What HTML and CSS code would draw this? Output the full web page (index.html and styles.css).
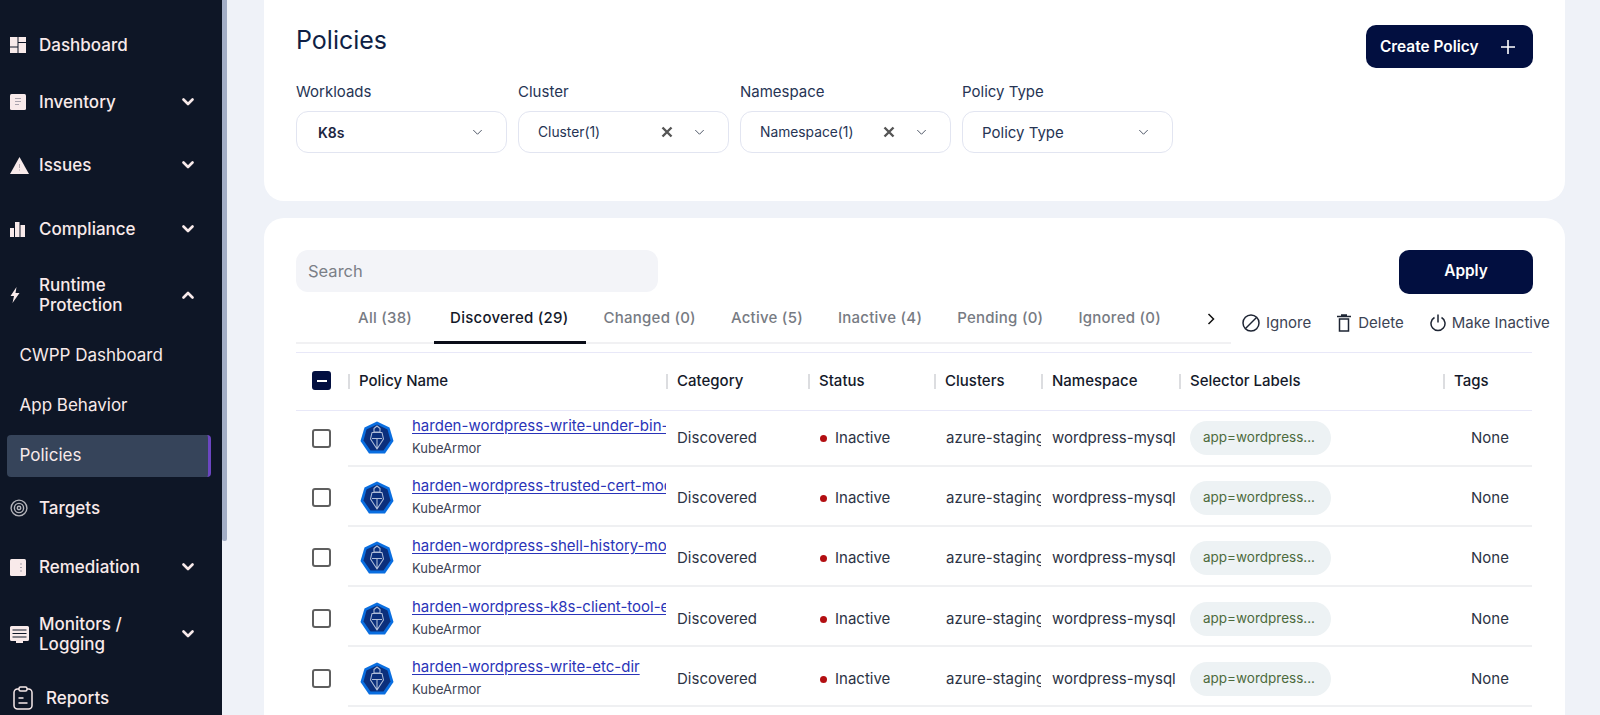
FILE: index.html
```html
<!DOCTYPE html>
<html lang="en">
<head>
    <meta charset="UTF-8">
    <meta name="viewport" content="width=device-width, initial-scale=1.0">
    <title>Policies</title>
    <link rel="stylesheet" href="styles.css">
</head>
<body>
    <svg class="svg-defs" aria-hidden="true">
        <defs>
            <symbol id="chev-down" viewBox="0 0 12 8"><path d="M1.500 1.500 6 6l4.500-4.500" fill="none" stroke="currentColor" stroke-width="2.600" stroke-linecap="round" stroke-linejoin="round"/></symbol>
            <symbol id="chev-up" viewBox="0 0 12 8"><path d="M1.500 6.500 6 2l4.500 4.500" fill="none" stroke="currentColor" stroke-width="2.600" stroke-linecap="round" stroke-linejoin="round"/></symbol>
            <symbol id="caret" viewBox="0 0 12 8"><path d="M1.500 1.500 6 6l4.500-4.500" fill="none" stroke="currentColor" stroke-width="1.100" stroke-linecap="round" stroke-linejoin="round"/></symbol>
            <symbol id="clear" viewBox="0 0 12 12"><path d="M1.500 1.500l9 9M10.500 1.500l-9 9" fill="none" stroke="currentColor" stroke-width="2.400"/></symbol>
            <symbol id="kubearmor" viewBox="0 0 34 34">
                <path d="M17 .5 29.500 6.500 33.500 20 25 32.500H9L.5 20 4.500 6.500Z" fill="#0a6ee0"/>
                <path d="M17 3.500 27.500 8.500 30.500 19.500 23.500 29.500H10.500L3.500 19.500 6.500 8.500Z" fill="#0b2f7c"/>
                <path d="M14 11V7.500L17 5l3 2.500V11ZM12 11.500h10l1.500 6.500L17 28l-6.500-10ZM12 17.500h10M17 17.500V27" fill="none" stroke="#aebcd8" stroke-width="1.100" stroke-linejoin="round"/>
            </symbol>
        </defs>
    </svg>

    <div class="app">
        <aside class="sidebar">
            <nav class="nav">
                <a class="nav-item h54">
                    <span class="nav-icon"><svg width="16" height="16" viewBox="0 0 16 16"><path d="M0 0h7.500v9.500H0ZM8.500 0H16v5H8.500ZM8.500 6H16v10H8.500ZM0 10.500h7.500V16H0Z" fill="#f8eaea"/></svg></span>
                    <span class="nav-label">Dashboard</span>
                </a>
                <a class="nav-item h60">
                    <span class="nav-icon"><svg width="16" height="16" viewBox="0 0 16 16"><rect width="16" height="16" rx="1.500" fill="#f8eaea"/><path d="M5 4.500h6M5 7.500h6M5 10.500h4" stroke="#a9a3ad" stroke-width="1"/></svg></span>
                    <span class="nav-label">Inventory</span>
                    <svg class="nav-chev"><use href="#chev-down"/></svg>
                </a>
                <a class="nav-item h66">
                    <span class="nav-icon"><svg width="19" height="17" viewBox="0 0 19 17"><path d="M9.500 0 19 17H0Z" fill="#f8eaea"/><path d="M9.500 7v4M9.500 12.500v1" stroke="#b5aab0" stroke-width="1"/></svg></span>
                    <span class="nav-label">Issues</span>
                    <svg class="nav-chev"><use href="#chev-down"/></svg>
                </a>
                <a class="nav-item h62">
                    <span class="nav-icon"><svg width="15" height="15" viewBox="0 0 15 15"><path d="M0 6h4v9H0ZM5 0h4.500v15H5ZM10.500 3H15v12h-4.500Z" fill="#f8eaea"/></svg></span>
                    <span class="nav-label">Compliance</span>
                    <svg class="nav-chev"><use href="#chev-down"/></svg>
                </a>
                <a class="nav-item h70">
                    <span class="nav-icon"><svg width="10" height="16" viewBox="0 0 10 16"><path d="M6.500 0 .5 9h3.500L2.500 16 9.500 6H5.500Z" fill="#f8eaea"/></svg></span>
                    <span class="nav-label">Runtime<br>Protection</span>
                    <svg class="nav-chev"><use href="#chev-up"/></svg>
                </a>
                <a class="nav-sub h50">CWPP Dashboard</a>
                <a class="nav-sub h50">App Behavior</a>
                <a class="nav-sub nav-sub-active">Policies</a>
                <a class="nav-item h60 nudge">
                    <span class="nav-icon"><svg width="18" height="18" viewBox="0 0 18 18" fill="none" stroke="#b4b4ba"><circle cx="9" cy="9" r="7.900" stroke-width="1.400"/><circle cx="9" cy="9" r="4.600" stroke-width="1.400"/><circle cx="9" cy="9" r="1.700" stroke-width="1.400"/></svg></span>
                    <span class="nav-label">Targets</span>
                </a>
                <a class="nav-item h60">
                    <span class="nav-icon"><svg width="16" height="17" viewBox="0 0 16 17"><rect width="16" height="17" rx="1.500" fill="#f8eaea"/><path d="M10 5h2M10 8.500h2M10 12h2" stroke="#a9a3ad" stroke-width="1"/></svg></span>
                    <span class="nav-label">Remediation</span>
                    <svg class="nav-chev"><use href="#chev-down"/></svg>
                </a>
                <a class="nav-item h74">
                    <span class="nav-icon"><svg width="19" height="17" viewBox="0 0 19 17"><path d="M1.500 0h16A1.500 1.500 0 0 1 19 1.500v12a1.500 1.500 0 0 1-1.500 1.500H13v2H6v-2H1.500A1.500 1.500 0 0 1 0 13.500v-12A1.500 1.500 0 0 1 1.500 0Z" fill="#f8eaea"/><path d="M2.500 4h14M2.500 7.500h14M2.500 11h14" stroke="#0e1626" stroke-width="1.200"/></svg></span>
                    <span class="nav-label">Monitors /<br>Logging</span>
                    <svg class="nav-chev"><use href="#chev-down"/></svg>
                </a>
                <a class="nav-item h54">
                    <span class="nav-icon nav-icon-wide"><svg width="20" height="24" viewBox="0 0 20 24" fill="none" stroke="#f8eaea" stroke-width="1.500"><rect x="1" y="3" width="18" height="20" rx="3.500"/><rect x="6" y="1" width="8" height="4" rx="1.500" fill="#0e1626"/><path d="M5.500 12h5M5.500 17h9"/></svg></span>
                    <span class="nav-label">Reports</span>
                </a>
            </nav>
        </aside>
        <div class="sidebar-scroll"><div class="sidebar-thumb"></div></div>

        <main class="main">
            <section class="card card-filters">
                <div class="filters-head">
                    <h1 class="page-title">Policies</h1>
                    <button class="btn btn-create">Create Policy
                        <svg width="14" height="14" viewBox="0 0 14 14"><path d="M7 0v14M0 7h14" stroke="#fff" stroke-width="1.600"/></svg>
                    </button>
                </div>
                <div class="filters">
                    <div class="filter">
                        <div class="filter-label">Workloads</div>
                        <div class="select select-k8s">
                            <span class="select-value">K8s</span>
                            <svg class="caret"><use href="#caret"/></svg>
                        </div>
                    </div>
                    <div class="filter">
                        <div class="filter-label">Cluster</div>
                        <div class="select select-multi">
                            <span class="select-value">Cluster(1)</span>
                            <svg class="clear"><use href="#clear"/></svg>
                            <svg class="caret"><use href="#caret"/></svg>
                        </div>
                    </div>
                    <div class="filter">
                        <div class="filter-label">Namespace</div>
                        <div class="select select-multi">
                            <span class="select-value">Namespace(1)</span>
                            <svg class="clear"><use href="#clear"/></svg>
                            <svg class="caret"><use href="#caret"/></svg>
                        </div>
                    </div>
                    <div class="filter">
                        <div class="filter-label">Policy Type</div>
                        <div class="select select-type">
                            <span class="select-value">Policy Type</span>
                            <svg class="caret"><use href="#caret"/></svg>
                        </div>
                    </div>
                </div>
            </section>

            <section class="card card-list">
                <div class="list-top">
                    <div class="search">Search</div>
                    <button class="btn btn-apply">Apply</button>
                </div>

                <div class="toolbar">
                    <div class="tabs">
                        <a class="tab tab-all">All (38)</a>
                        <a class="tab tab-active">Discovered (29)</a>
                        <a class="tab">Changed (0)</a>
                        <a class="tab">Active (5)</a>
                        <a class="tab">Inactive (4)</a>
                        <a class="tab">Pending (0)</a>
                        <a class="tab">Ignored (0)</a>
                        <svg class="tabs-next" width="8" height="12" viewBox="0 0 8 12"><path d="M1.500 1 6.500 6l-5 5" fill="none" stroke="#111" stroke-width="1.500"/></svg>
                    </div>
                    <div class="actions">
                        <a class="action action-ignore"><svg width="18" height="18" viewBox="0 0 18 18" fill="none" stroke="#1d2433" stroke-width="1.500"><circle cx="9" cy="9" r="8"/><path d="M3.500 14.500l11-11"/></svg>Ignore</a>
                        <a class="action action-delete"><svg width="14" height="18" viewBox="0 0 14 18" fill="none" stroke="#1d2433" stroke-width="1.500"><path d="M2.500 5h9v12h-9ZM0 2.500h14M4 1h6" /></svg>Delete</a>
                        <a class="action"><svg width="16" height="18" viewBox="0 0 16 18" fill="none" stroke="#1d2433" stroke-width="1.500"><path d="M8 .5v8M4.500 3.500a7 7 0 1 0 7 0"/></svg>Make Inactive</a>
                    </div>
                </div>

                <table class="policies">
                    <colgroup>
                        <col class="col-check"><col class="col-name"><col class="col-cat"><col class="col-status"><col class="col-cluster"><col class="col-ns"><col class="col-labels"><col class="col-tags">
                    </colgroup>
                    <thead>
                        <tr>
                            <th class="th-check"><span class="checkbox checkbox-on"></span></th>
                            <th>Policy Name</th>
                            <th>Category</th>
                            <th>Status</th>
                            <th>Clusters</th>
                            <th>Namespace</th>
                            <th>Selector Labels</th>
                            <th>Tags</th>
                        </tr>
                    </thead>
                    <tbody>
                        <tr>
                            <td class="td-check"><span class="checkbox"></span></td>
                            <td><div class="policy"><svg class="policy-icon"><use href="#kubearmor"/></svg><div class="policy-text"><a class="policy-link">harden-wordpress-write-under-bin-dir</a><div class="policy-type">KubeArmor</div></div></div></td>
                            <td>Discovered</td>
                            <td><span class="dot"></span>Inactive</td>
                            <td class="td-cluster">azure-staging-cluster</td>
                            <td>wordpress-mysql</td>
                            <td><span class="pill">app=wordpress...</span></td>
                            <td class="td-tags">None</td>
                        </tr>
                        <tr>
                            <td class="td-check"><span class="checkbox"></span></td>
                            <td><div class="policy"><svg class="policy-icon"><use href="#kubearmor"/></svg><div class="policy-text"><a class="policy-link">harden-wordpress-trusted-cert-mod</a><div class="policy-type">KubeArmor</div></div></div></td>
                            <td>Discovered</td>
                            <td><span class="dot"></span>Inactive</td>
                            <td class="td-cluster">azure-staging-cluster</td>
                            <td>wordpress-mysql</td>
                            <td><span class="pill">app=wordpress...</span></td>
                            <td class="td-tags">None</td>
                        </tr>
                        <tr>
                            <td class="td-check"><span class="checkbox"></span></td>
                            <td><div class="policy"><svg class="policy-icon"><use href="#kubearmor"/></svg><div class="policy-text"><a class="policy-link">harden-wordpress-shell-history-mod</a><div class="policy-type">KubeArmor</div></div></div></td>
                            <td>Discovered</td>
                            <td><span class="dot"></span>Inactive</td>
                            <td class="td-cluster">azure-staging-cluster</td>
                            <td>wordpress-mysql</td>
                            <td><span class="pill">app=wordpress...</span></td>
                            <td class="td-tags">None</td>
                        </tr>
                        <tr>
                            <td class="td-check"><span class="checkbox"></span></td>
                            <td><div class="policy"><svg class="policy-icon"><use href="#kubearmor"/></svg><div class="policy-text"><a class="policy-link">harden-wordpress-k8s-client-tool-exec</a><div class="policy-type">KubeArmor</div></div></div></td>
                            <td>Discovered</td>
                            <td><span class="dot"></span>Inactive</td>
                            <td class="td-cluster">azure-staging-cluster</td>
                            <td>wordpress-mysql</td>
                            <td><span class="pill">app=wordpress...</span></td>
                            <td class="td-tags">None</td>
                        </tr>
                        <tr>
                            <td class="td-check"><span class="checkbox"></span></td>
                            <td><div class="policy"><svg class="policy-icon"><use href="#kubearmor"/></svg><div class="policy-text"><a class="policy-link">harden-wordpress-write-etc-dir</a><div class="policy-type">KubeArmor</div></div></div></td>
                            <td>Discovered</td>
                            <td><span class="dot"></span>Inactive</td>
                            <td class="td-cluster">azure-staging-cluster</td>
                            <td>wordpress-mysql</td>
                            <td><span class="pill">app=wordpress...</span></td>
                            <td class="td-tags">None</td>
                        </tr>
                    </tbody>
                </table>
            </section>
        </main>
    </div>
</body>
</html>
```

FILE: styles.css
```css
/* General page styling */
* {
    box-sizing: border-box;
}

html, body {
    height: 100%;
}

body {
    margin: 0;
    overflow: hidden;
    font-family: Inter, "Noto Sans", sans-serif;
    font-size: 15px;
    background-color: #eff2f8;
    color: #1d2433;
}

.svg-defs {
    display: none;
}

.app {
    display: flex;
    height: 715px;
    overflow: hidden;
}

/* Sidebar */
.sidebar {
    width: 222px;
    flex: none;
    background-color: #0e1626;
    color: #f8eaea;
    overflow: hidden;
}

.sidebar-scroll {
    width: 5px;
    flex: none;
}

.sidebar-thumb {
    height: 541px;
    background-color: #a3aec6;
    border-radius: 0 0 2px 2px;
}

.nav {
    padding-top: 18px;
    display: flex;
    flex-direction: column;
}

.nav-item {
    display: flex;
    align-items: center;
    flex: none;
    padding: 0 28px 0 10px;
    font-size: 17px;
    font-weight: 500;
    line-height: 20px;
}

.nav-icon {
    width: 29px;
    flex: none;
    display: flex;
    align-items: center;
}

.nav-icon-wide {
    width: 36px;
    padding-left: 3px;
}

.nav-label {
    flex: 1;
}

.nav-chev {
    width: 12px;
    height: 8px;
    flex: none;
}

/* Item heights in the side menu are not even */
.h50 { height: 50px; }
.h54 { height: 54px; }
.h60 { height: 60px; }
.h62 { height: 62px; }
.h66 { height: 66px; }
.h70 { height: 70px; }
.h74 { height: 74px; }

.nudge {
    padding-top: 2px;
}

.nav-sub {
    display: flex;
    align-items: center;
    flex: none;
    padding-left: 19.500px;
    font-size: 17px;
    font-weight: 400;
}

.nav-sub-active {
    height: 42px;
    margin: 5px 11px 0 7px;
    padding-left: 12.500px;
    padding-bottom: 2px;
    background-color: #36445a;
    border-right: 3px solid #6b46c1;
    border-radius: 4px;
}

/* Main area */
.main {
    flex: 1;
    min-width: 0;
    padding: 0 35px 0 37px;
    display: flex;
    flex-direction: column;
    gap: 17px;
}

.card {
    background-color: #fff;
    padding-left: 32px;
    padding-right: 32px;
}

.card-filters {
    height: 201px;
    flex: none;
    border-radius: 0 0 20px 20px;
}

.card-list {
    flex: 1;
    padding-top: 32px;
    border-radius: 20px 20px 0 0;
}

.filters-head {
    display: flex;
    justify-content: space-between;
    align-items: flex-start;
    padding-top: 25px;
    height: 82px;
}

.page-title {
    margin: 0;
    font-size: 25px;
    font-weight: 400;
    line-height: 30px;
    color: #0f1f45;
}

.btn {
    border: none;
    border-radius: 10px;
    background-color: #020f40;
    color: #fff;
    font-family: inherit;
    font-size: 15.400px;
    font-weight: 600;
}

.btn-create {
    width: 167px;
    height: 43px;
    display: flex;
    align-items: center;
    justify-content: space-between;
    padding: 0 18px 0 14px;
}

.btn-apply {
    width: 134px;
    height: 44px;
    padding-bottom: 4px;
}

.filters {
    display: flex;
    gap: 11px;
}

.filter {
    width: 211px;
}

.filter-label {
    margin-bottom: 9px;
    font-size: 15px;
    line-height: 20px;
    color: #263454;
}

.select {
    height: 42px;
    display: flex;
    align-items: center;
    border: 1px solid #e2e5f1;
    border-radius: 12px;
    color: #263454;
    font-size: 13.800px;
}

.select-value {
    flex: 1;
}

.select-k8s {
    padding: 0 23px 0 21px;
}

.select-k8s .select-value {
    font-size: 14px;
    font-weight: 600;
    color: #1c2540;
}

.select-multi {
    padding: 0 23px 0 19px;
}

.select-type {
    padding: 0 23px 0 19px;
}

.select-type .select-value {
    font-size: 15px;
}

.caret {
    width: 11px;
    height: 7px;
    flex: none;
    color: #4a5263;
}

.clear {
    width: 12px;
    height: 12px;
    flex: none;
    margin-right: 21px;
    color: #555;
}

/* Search and tabs */
.list-top {
    display: flex;
    justify-content: space-between;
    align-items: flex-start;
}

.search {
    width: 362px;
    height: 42px;
    display: flex;
    align-items: center;
    padding: 0 0 1px 12px;
    background-color: #f3f4f8;
    border-radius: 12px;
    font-size: 16.500px;
    color: #7b7f87;
}

.toolbar {
    display: flex;
    height: 50px;
    margin-right: -16px;
}

.tabs {
    width: 935px;
    height: 50px;
    flex: none;
    display: flex;
    align-items: flex-end;
    border-bottom: 2px solid #f1f1f3;
    padding-left: 44px;
}

.tab {
    height: 50px;
    margin-bottom: -2px;
    padding: 14px 18px 0 17px;
    font-size: 15px;
    font-weight: 500;
    line-height: 20px;
    color: #777b83;
    letter-spacing: 0.25px;
}

.tab-all {
    padding-left: 18px;
    padding-right: 22px;
}

.tab-active {
    padding-left: 16px;
    color: #14192a;
    border-bottom: 3px solid #0a0d18;
}

.tabs-next {
    align-self: flex-start;
    margin: 19px 0 0 28px;
}

.actions {
    display: flex;
    align-items: center;
    padding: 7px 0 0 11px;
    height: 50px;
    flex: none;
    color: #3c4354;
}

.action {
    display: flex;
    align-items: center;
    gap: 6px;
    font-size: 15px;
}

.action-ignore {
    margin-right: 26px;
}

.action-delete {
    gap: 7px;
    margin-right: 26px;
}

/* Policy table */
.policies {
    width: 1236px;
    margin-top: 8px;
    table-layout: fixed;
    border-collapse: collapse;
    border-top: 1px solid #e8e8f8;
}

.col-check { width: 52px; }
.col-name { width: 318px; }
.col-cat { width: 142px; }
.col-status { width: 126px; }
.col-cluster { width: 107px; }
.col-ns { width: 138px; }
.col-labels { width: 264px; }
.col-tags { width: 89px; }

.policies th {
    height: 58px;
    padding: 0 0 2px 11px;
    text-align: left;
    font-weight: 500;
    color: #14192a;
    border-bottom: 1px solid #e8e8f8;
    background: linear-gradient(#dcdde0, #dcdde0) left center / 2px 15px no-repeat;
}

.policies th.th-check {
    padding-left: 16px;
    background: none;
}

.policies td {
    height: 60px;
    padding: 4px 0 0 11px;
    color: #2c3344;
    white-space: nowrap;
    overflow: hidden;
    border-bottom: 2px solid #eff0f2;
}

/* First row is shorter, the last ones sit a little lower */
.policies tr:first-child td {
    height: 55px;
    padding-top: 0;
}

.policies tr:nth-child(n+4) td {
    padding-top: 6px;
}

.policies td.td-check {
    padding-left: 16px;
    border-bottom: none;
}

.policies td.td-cluster {
    padding-left: 12px;
}

.policies td.td-tags {
    padding-left: 28px;
}

.checkbox {
    display: block;
    width: 19px;
    height: 19px;
    border: 2px solid #5f5f5f;
    border-radius: 3px;
}

.checkbox-on {
    display: flex;
    align-items: center;
    justify-content: center;
    border-color: #020f40;
    background-color: #020f40;
}

.checkbox-on::after {
    content: "";
    width: 10px;
    height: 2px;
    background-color: #fff;
}

.policy {
    display: flex;
    align-items: center;
    gap: 18px;
    margin-left: 1px;
}

.policy-icon {
    width: 34px;
    height: 34px;
    flex: none;
}

.policy-text {
    min-width: 0;
    overflow: hidden;
    margin-top: -4px;
}

.policy-link {
    display: block;
    font-size: 15px;
    line-height: 19px;
    color: #2a34b8;
    text-decoration: underline;
    text-underline-offset: 2px;
}

.policy-type {
    margin-top: 6px;
    font-size: 13px;
    line-height: 15px;
    color: #3c4354;
}

.dot {
    display: inline-block;
    width: 7px;
    height: 7px;
    margin: 0 8px 1px 1px;
    border-radius: 50%;
    background-color: #b30f12;
}

.pill {
    display: inline-block;
    width: 141px;
    height: 34px;
    padding-left: 13px;
    line-height: 33px;
    border-radius: 17px;
    background-color: #edf2f4;
    color: #4d6b3d;
    font-size: 13.500px;
}
```
